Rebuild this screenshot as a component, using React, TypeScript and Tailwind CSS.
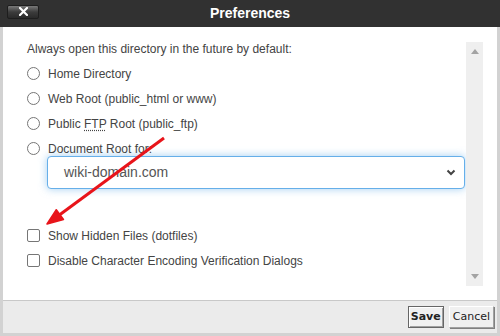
import React from "react";

function Radio({ label }: { label: React.ReactNode }) {
  return (
    <div className="h-[25px] flex items-center">
      <span className="w-[13px] h-[13px] rounded-full border border-[#767676] bg-white shrink-0" />
      <span className="ml-[8px] text-[12px] leading-[14px] text-[#444]">{label}</span>
    </div>
  );
}

function Check({ label }: { label: string }) {
  return (
    <div className="h-[25px] flex items-center">
      <span className="w-[13px] h-[13px] rounded-[2px] border border-[#767676] bg-white shrink-0" />
      <span className="ml-[8px] text-[12px] leading-[14px] text-[#444]">{label}</span>
    </div>
  );
}

export default function App() {
  return (
    <div
      className="w-[500px] h-[336px] flex flex-col relative overflow-hidden"
      style={{ fontFamily: '"Liberation Sans", Arial, sans-serif' }}
    >
      {/* Title bar */}
      <div className="h-[27px] bg-[#313131] flex items-center relative shrink-0">
        <div className="ml-[7px] w-[32px] h-[14px] -mt-[4px] rounded-[2px] border border-[#1e1e1e] bg-gradient-to-b from-[#7a7a7a] via-[#3c3c3c] to-[#2a2a2a] flex items-center justify-center">
          <svg width="9" height="9" viewBox="0 0 9 9">
            <path d="M1 1 L8 8 M8 1 L1 8" stroke="#fff" strokeWidth="2.2" strokeLinecap="square" />
          </svg>
        </div>
        <div className="absolute inset-0 flex items-center justify-center text-white font-bold text-[14px] pointer-events-none">
          Preferences
        </div>
      </div>

      {/* Body */}
      <div className="flex-1 flex flex-col border-x-[3px] border-[#d2d2d2] bg-white">
        <div className="flex-1 flex pt-[15px] pb-[14px] pr-[14px]">
          <div className="flex-1 pl-[24px] pr-[1px]">
            <div className="text-[12px] leading-[14px] text-[#444]">
              Always open this directory in the future by default:
            </div>
            <div className="mt-[5px]">
              <Radio label="Home Directory" />
              <Radio label="Web Root (public_html or www)" />
              <Radio
                label={
                  <>
                    Public{" "}
                    <span className="underline decoration-dotted decoration-[#444] underline-offset-2">FTP</span> Root
                    (public_ftp)
                  </>
                }
              />
              <Radio label="Document Root for:" />
            </div>
            <div className="ml-[20px] -mt-[5px] h-[33px] rounded-[4px] border border-[#66afe9] shadow-[0_0_8px_rgba(102,175,233,0.6)] bg-white flex items-center justify-between pl-[16px] pr-[8px]">
              <span className="text-[14px] text-[#555]">wiki-domain.com</span>
              <svg width="10" height="7" viewBox="0 0 10 7">
                <path d="M1.5 1.5 L5 5 L8.5 1.5" stroke="#444" strokeWidth="2" fill="none" />
              </svg>
            </div>
            <div className="mt-[34px]">
              <Check label="Show Hidden Files (dotfiles)" />
              <Check label="Disable Character Encoding Verification Dialogs" />
            </div>
          </div>
          <div className="w-[17px] bg-[#efefef] flex flex-col items-center justify-between py-[7px]">
            <svg width="8" height="5" viewBox="0 0 8 5">
              <path d="M0 5 L4 0 L8 5 Z" fill="#a3a3a3" />
            </svg>
            <svg width="8" height="5" viewBox="0 0 8 5">
              <path d="M0 0 L4 5 L8 0 Z" fill="#a3a3a3" />
            </svg>
          </div>
        </div>
        <div className="h-[33px] border-t border-[#c8c8c8] bg-[#ebebeb] flex items-center justify-end gap-[5px] pr-[3px]">
          <button
            className="h-[22px] px-[2px] bg-[#f0f0f0] border border-[#666] shadow-[inset_1px_1px_#fff,inset_-1px_-1px_#a0a0a0] text-[11px] font-bold text-[#222]"
            style={{ fontFamily: '"DejaVu Sans", Verdana, sans-serif' }}
          >
            Save
          </button>
          <button
            className="h-[22px] px-[3px] bg-[#f0f0f0] border border-[#a0a0a0] border-t-white border-l-white shadow-[1px_1px_#808080] text-[11px] text-[#222]"
            style={{ fontFamily: '"DejaVu Sans", Verdana, sans-serif' }}
          >
            Cancel
          </button>
        </div>
      </div>
      <div className="h-[3px] bg-[#d2d2d2] shrink-0" />

      {/* Red annotation arrow */}
      <svg className="absolute left-0 top-0 pointer-events-none" width="500" height="336">
        <line x1="164" y1="138" x2="58" y2="216" stroke="#e8141a" strokeWidth="3" />
        <path d="M47 224 L63.5 219.5 L56.3 209.7 Z" fill="#e8141a" stroke="#e8141a" strokeWidth="1.5" strokeLinejoin="round" />
      </svg>
    </div>
  );
}
